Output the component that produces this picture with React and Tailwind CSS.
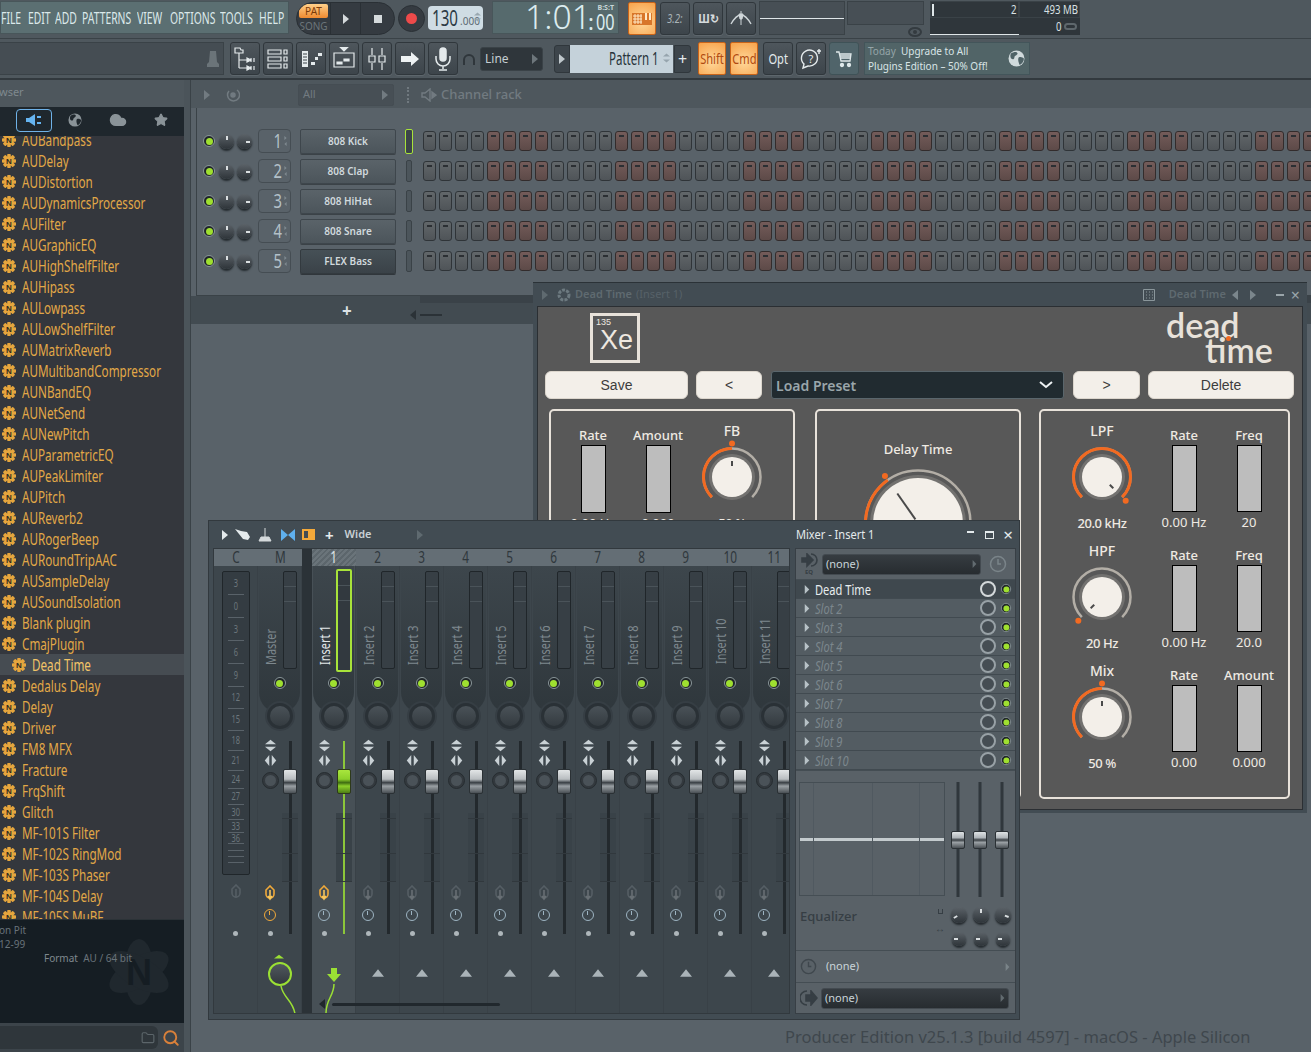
import { Cloud, Star, Search, Folder } from 'lucide-react';

const plugins = ['AUBandpass','AUDelay','AUDistortion','AUDynamicsProcessor','AUFilter','AUGraphicEQ','AUHighShelfFilter','AUHipass','AULowpass','AULowShelfFilter','AUMatrixReverb','AUMultibandCompressor','AUNBandEQ','AUNetSend','AUNewPitch','AUParametricEQ','AUPeakLimiter','AUPitch','AUReverb2','AURogerBeep','AURoundTripAAC','AUSampleDelay','AUSoundIsolation','Blank plugin','CmajPlugin','Dead Time','Dedalus Delay','Delay','Driver','FM8 MFX','Fracture','FrqShift','Glitch','MF-101S Filter','MF-102S RingMod','MF-103S Phaser','MF-104S Delay','MF-105S MuBF'];
const channels = ['808 Kick','808 Clap','808 HiHat','808 Snare','FLEX Bass'];
const scale = [['3',23],['0',23],['3',23],['6',23],['9',23],['12',22],['15',22],['18',20],['21',20],['24',18],['27',16],['30',15],['33',13],['36',11]];

function Narrow({ children, className = '' }) {
  return <span className={`inline-block origin-left scale-x-[.74] whitespace-nowrap ${className}`}>{children}</span>;
}

function NarrowC({ children, className = '' }) {
  return <span className={`inline-block origin-center scale-x-[.74] whitespace-nowrap ${className}`}>{children}</span>;
}

function Tri({ className = '', dir = 'r' }) {
  const pts = { r: '1,0 7,5 1,10', l: '7,0 1,5 7,10', u: '0,7 5,1 10,7', d: '0,1 5,7 10,1' };
  return <svg width="8" height="10" preserveAspectRatio="none" viewBox={dir === 'u' || dir === 'd' ? '0 0 10 8' : '0 0 8 10'} className={`shrink-0 ${className}`}><polygon points={pts[dir]} fill="currentColor" /></svg>;
}

function Globe({ size = 16, land = '#4f6367', sea = '#d0dadc' }) {
  return (
    <svg width={size} height={size} viewBox="0 0 16 16" className="shrink-0">
      <circle cx="8" cy="8" r="7.5" fill={sea} />
      <path d="M3 3c2-1 5-2 6 0 0 2-3 2-3 4s-2 2-3 1-1-4 0-5zM10 7c2-1 4 0 5 1 0 3-2 5-4 6-1-2-2-5-1-7z" fill={land} />
    </svg>
  );
}

function Led() {
  return (
    <div className="w-[12px] h-[12px] shrink-0 rounded-full bg-[#20262a] border border-[#8a9699] flex items-center justify-center">
      <div className="w-[7px] h-[7px] rounded-full bg-[#9fe030]" />
    </div>
  );
}

function Dial({ size = 16, angle = 0 }) {
  return (
    <div className="relative shrink-0 rounded-full bg-[linear-gradient(#5b6268,#2e3439)] shadow-[0_2px_2px_#23292d]" style={{ width: size, height: size }}>
      <div className="absolute inset-0" style={{ transform: `rotate(${angle}deg)` }}>
        <div className="absolute left-1/2 top-[2px] w-[2px] h-[4px] -ml-[1px] bg-[#d9dee0]" />
      </div>
    </div>
  );
}

function PluginIcon() {
  const teeth = [0, 45, 90, 135];
  return (
    <svg width="14" height="14" viewBox="0 0 14 14" className="shrink-0">
      {teeth.map(a => <rect key={a} x="5.2" y="0" width="3.6" height="14" rx=".8" fill="#e6a63e" transform={`rotate(${a} 7 7)`} />)}
      <circle cx="7" cy="7" r="4.6" fill="#e6a63e" />
      <text x="7" y="10" textAnchor="middle" fontSize="8" fontWeight="700" fill="#2e2a20" fontFamily="Liberation Sans, sans-serif">N</text>
    </svg>
  );
}

function ToolBtn({ children, className = '' }) {
  return <div className={`w-[30px] h-[33px] shrink-0 rounded-[3px] border border-[#30373c] bg-[linear-gradient(#4e565c,#3d454b)] shadow-[0_1px_0_#5d666c] flex items-center justify-center text-[#e4eaec] ${className}`}>{children}</div>;
}

function OrangeBtn({ children, className = '' }) {
  return <div className={`h-[33px] shrink-0 rounded-[2px] border border-[#c8641a] bg-[radial-gradient(circle_at_50%_60%,#ffd89a,#f7a24a)] flex items-center justify-center text-[#b04a10] ${className}`}>{children}</div>;
}

function MenuBar() {
  const items = [['FILE', 27], ['EDIT', 27], ['ADD', 27], ['PATTERNS', 55], ['VIEW', 33], ['OPTIONS', 50], ['TOOLS', 39], ['HELP', 30]];
  return (
    <div className="w-[289px] h-[33px] mt-[1px] shrink-0 bg-[#5b6f72] border border-[#48565a] flex items-center text-[17px] text-[#dbe9ea]">
      {items.map(([t, w]) => <div key={t} className="shrink-0" style={{ width: w }}><span className="inline-block origin-left scale-x-[.61] whitespace-nowrap">{t}</span></div>)}
    </div>
  );
}

function Transport() {
  return (
    <div className="ml-[7px] w-[99px] h-[33px] mt-[2px] shrink-0 rounded-full bg-[#353b41] border border-[#2a3035] flex overflow-hidden">
      <div className="w-[34px] flex flex-col items-center border-r border-[#2a3035]">
        <div className="w-[29px] h-[14px] mt-[1px] rounded-[2px] bg-[linear-gradient(#ffd08a,#f08a30)] text-[10px] leading-[14px] text-center text-[#7a3b0a]">PAT</div>
        <div className="text-[10px] leading-[16px] text-[#6c757a]">SONG</div>
      </div>
      <div className="w-[30px] flex items-center justify-center border-r border-[#2a3035] text-[#d5dadc]"><Tri /></div>
      <div className="flex-1 flex items-center justify-center"><div className="w-[8px] h-[8px] bg-[#d5dadc]" /></div>
    </div>
  );
}

function TopRow() {
  return (
    <div className="h-[39px] flex bg-[#4f585e] border-b border-[#3a4247]">
      <MenuBar />
      <Transport />
      <div className="ml-[3px] mt-[5px] w-[27px] h-[27px] shrink-0 rounded-full bg-[#353b41] border border-[#2a3035] flex items-center justify-center"><div className="w-[11px] h-[11px] rounded-full bg-[#ee4a4a]" /></div>
      <div className="ml-[3px] mt-[6px] w-[55px] h-[24px] shrink-0 rounded-[4px] bg-[#cfdce4] flex items-center pl-[4px] text-[#2b3a44] relative">
        <span className="inline-block origin-left scale-x-[.72] whitespace-nowrap text-[21px] leading-[24px]">130</span>
        <span className="-ml-[8px] text-[10px] mt-[6px] text-[#5c6a73]">.000</span>
        <div className="absolute right-[2px] top-[6px] flex flex-col gap-[2px] text-[#9aa8b0]"><Tri dir="u" className="!w-[7px] !h-[4px]" /><Tri dir="d" className="!w-[7px] !h-[4px]" /></div>
      </div>
      <div className="ml-[9px] mt-[1px] w-[127px] h-[33px] shrink-0 bg-[#566a6d] border border-[#48565a] relative">
        <div className="absolute left-[32px] top-[-5px] text-[33px] leading-[40px] text-[#dcecef] font-light"><span className="inline-block origin-left scale-x-[1.02] whitespace-nowrap">1:01</span></div>
        <div className="absolute left-[103px] top-[7px] text-[22px] leading-[24px] text-[#dcecef]"><Narrow>00</Narrow></div>
        <div className="absolute left-[95px] top-[7px] text-[22px] leading-[24px] text-[#dcecef]">:</div>
        <div className="absolute right-[4px] top-[1px] text-[7px] leading-[9px] font-bold text-[#c9d6d8]">B:S:T</div>
      </div>
      <OrangeBtn className="ml-[9px] mt-[2px] w-[28px]">
        <svg width="22" height="14" viewBox="0 0 22 14"><path d="M1 1h11v12H1zM12 1h9v12h-9z" fill="#d8762a" /><path d="M2 4h9M2 7h9M2 10h9M4 2v10M7 2v10M10 2v10" stroke="#ffe9c6" strokeWidth="1" /><path d="M14 1h2v7h-2zM18 1h2v7h-2z" fill="#ffe9c6" /></svg>
      </OrangeBtn>
      <ToolBtn className="ml-[4px] mt-[2px]"><span className="text-[12px] italic text-[#aab4b8] scale-x-[.8]">3.2:</span></ToolBtn>
      <ToolBtn className="ml-[3px] mt-[2px]"><span className="text-[12px] font-bold text-[#d5dadc] scale-x-[.9]">Ш↻</span></ToolBtn>
      <ToolBtn className="ml-[3px] mt-[2px]">
        <svg width="24" height="20" viewBox="0 0 24 20"><path d="M2 15C6 8 9 6 12 6s6 2 10 9" fill="none" stroke="#cfd6d9" strokeWidth="1.4" /><path d="M12 2v14M10 5h4l-1 5h-2z" stroke="#cfd6d9" fill="#cfd6d9" strokeWidth="1" /></svg>
      </ToolBtn>
      <div className="ml-[3px] mt-[1px] w-[86px] h-[34px] shrink-0 bg-[#474f55] border border-[#3a4247] flex items-center"><div className="w-full h-[1px] bg-[#dfe6e8]" /></div>
      <div className="ml-[2px] mt-[1px] w-[77px] shrink-0 relative">
        <div className="h-[24px] bg-[#474f55] border border-[#3a4247]" />
        <svg width="14" height="10" viewBox="0 0 14 10" className="absolute right-[2px] top-[26px]"><ellipse cx="7" cy="5" rx="6" ry="4" fill="none" stroke="#343b40" strokeWidth="2" /><circle cx="7" cy="5" r="2" fill="#343b40" /></svg>
      </div>
      <div className="ml-[6px] mt-[1px] w-[150px] h-[34px] shrink-0 grid grid-cols-[89px_61px] grid-rows-2 text-[#d9e0e3] text-[13px]">
        <div className="bg-[#2f363b] border border-[#3a4247] flex items-center justify-between pl-[1px] pr-[2px]"><div className="w-[2px] h-[12px] bg-[#dfe6e8]" /><Narrow className="origin-right">2</Narrow></div>
        <div className="bg-[#2f363b] border border-[#3a4247] flex items-center justify-end pr-[1px]"><Narrow className="origin-right">493 MB</Narrow></div>
        <div className="bg-[#2f363b] border-b border-[#dfe6e8]" />
        <div className="bg-[#2f363b] flex items-center justify-end gap-[3px] pr-[3px]"><Narrow className="origin-right">0</Narrow><div className="w-[13px] h-[7px] rounded-full border-2 border-[#5e676c]" /></div>
      </div>
    </div>
  );
}

function Row2() {
  return (
    <div className="h-[41px] flex items-center bg-[#4f585e] border-b-2 border-[#32393e]">
      <div className="w-[224px] h-[33px] shrink-0 bg-[#454d53] border-y border-r border-[#3a4247] flex items-center justify-end pr-[3px]">
        <svg width="14" height="18" viewBox="0 0 14 18"><path d="M4 1h6l1 11 2 2v3H1v-3l2-2z" fill="#6b7479" /></svg>
      </div>
      <div className="ml-[6px] flex gap-[3px] shrink-0">
        <ToolBtn><svg width="22" height="24" viewBox="0 0 22 24" fill="none" stroke="#e4eaec" strokeWidth="1.2"><path d="M1 1h5l1 2h2v3H1zM5 6v15M5 13h8M5 21h8" /><path d="M13 11l4 2-4 2zM13 19l4 2-4 2zM17 11v4M17 19v4M20 11v4M20 19v4" fill="#e4eaec" /></svg></ToolBtn>
        <ToolBtn><svg width="22" height="22" viewBox="0 0 22 22" fill="none" stroke="#e4eaec" strokeWidth="1.2"><path d="M1 2h13v4H1zM1 9h13v4H1zM1 16h13v4H1zM17 2h3v4h-3zM17 9h3v4h-3zM17 16h3v4h-3z" /></svg></ToolBtn>
        <ToolBtn><svg width="22" height="22" viewBox="0 0 22 22" fill="#e4eaec"><path d="M2 3h6v16H2z" /><path d="M3 6h4M3 9h4M3 12h4M3 15h4" stroke="#3d454b" /><path d="M11 14h4v3h-4zM15 9h3v3h-3zM18 5h4v3h-4z" /></svg></ToolBtn>
        <ToolBtn><svg width="22" height="24" viewBox="0 0 22 24" fill="none" stroke="#e4eaec" strokeWidth="1.2"><path d="M7 0h8l-4 4z" fill="#e4eaec" /><path d="M1 6h20v14H1z" /><path d="M4 15h5v2H4zM11 12h5v2h-5z" fill="#e4eaec" /></svg></ToolBtn>
        <ToolBtn><svg width="20" height="24" viewBox="0 0 20 24" fill="none" stroke="#e4eaec" strokeWidth="1.2"><path d="M5 1v7M5 16v7M15 1v7M15 16v7M2 9h6v6H2zM12 9h6v6h-6z" /></svg></ToolBtn>
        <ToolBtn><svg width="20" height="14" viewBox="0 0 20 14"><path d="M1 4h10V0l8 7-8 7v-4H1z" fill="#eef2f3" /></svg></ToolBtn>
        <ToolBtn><svg width="18" height="24" viewBox="0 0 18 24" fill="none" stroke="#e4eaec" strokeWidth="1.5"><rect x="6" y="1" width="6" height="13" rx="3" fill="#e4eaec" /><path d="M2 9v3a7 7 0 0 0 14 0V9M9 19v3M5 23h8" /></svg></ToolBtn>
      </div>
      <svg width="14" height="14" viewBox="0 0 14 14" className="ml-[4px] shrink-0" fill="none" stroke="#2f363b" strokeWidth="2"><path d="M2 13V8a5 5 0 0 1 10 0v5" /></svg>
      <div className="ml-[4px] w-[63px] h-[24px] shrink-0 rounded-[3px] bg-[#2f363b] border border-[#3a4247] flex items-center justify-between pl-[4px] pr-[3px] text-[12px] text-[#c5ced2]">Line<Tri className="text-[#6d767b]" /></div>
      <div className="ml-[11px] w-[16px] h-[28px] shrink-0 rounded-l-[3px] bg-[#3d454b] border border-[#30373c] flex items-center justify-center text-[#bfc7cb]"><Tri /></div>
      <div className="w-[103px] h-[28px] shrink-0 bg-[#c5d2da] flex items-center justify-end pr-[14px] text-[18px] text-[#27333b] relative">
        <span className="inline-block origin-right scale-x-[.64] whitespace-nowrap">Pattern 1</span>
        <div className="absolute right-[3px] top-[8px] flex flex-col gap-[2px] text-[#96a4ad]"><Tri dir="u" className="!w-[7px] !h-[4px]" /><Tri dir="d" className="!w-[7px] !h-[4px]" /></div>
      </div>
      <div className="ml-[1px] w-[17px] h-[28px] shrink-0 rounded-r-[3px] bg-[#3d454b] border border-[#30373c] flex items-center justify-center text-[#e4eaec] text-[16px]">+</div>
      <OrangeBtn className="ml-[7px] w-[28px] text-[15px]"><NarrowC>Shift</NarrowC></OrangeBtn>
      <OrangeBtn className="ml-[4px] w-[28px] text-[15px]"><NarrowC>Cmd</NarrowC></OrangeBtn>
      <ToolBtn className="ml-[5px] text-[15px]"><NarrowC>Opt</NarrowC></ToolBtn>
      <ToolBtn className="ml-[3px]"><svg width="24" height="24" viewBox="0 0 24 24" fill="none" stroke="#e4eaec" strokeWidth="1.4"><path d="M4 21l1-4a8 8 0 1 1 4 2z" /><text x="12" y="16" textAnchor="middle" fontSize="11" fill="#e4eaec" stroke="none">?</text><path d="M20 2v5M18 4h4" /></svg></ToolBtn>
      <div className="ml-[3px] w-[30px] h-[33px] shrink-0 rounded-[3px] border border-[#3f5257] bg-[#50646a] flex items-center justify-center">
        <svg width="18" height="18" viewBox="0 0 18 18" fill="none" stroke="#dfe8ea" strokeWidth="1.3"><path d="M1 2h3l2 9h9l1-7H5" /><path d="M5 6h11M6 8h10" /><circle cx="7" cy="15" r="1.5" fill="#dfe8ea" /><circle cx="14" cy="15" r="1.5" fill="#dfe8ea" /></svg>
      </div>
      <div className="ml-[5px] w-[166px] h-[33px] shrink-0 bg-[#516467] border border-[#43555a] flex items-center justify-between pl-[3px] pr-[4px] text-[10px] leading-[15px] text-[#d9e4e6]">
        <div className="whitespace-nowrap"><span className="text-[#95a4a7]">Today</span>&nbsp; Upgrade to All<br />Plugins Edition – 50% Off!</div>
        <Globe size={17} />
      </div>
    </div>
  );
}

function Sidebar() {
  return (
    <div className="w-[184px] h-full flex flex-col shrink-0 bg-[#34373d]">
      <div className="h-[27px] bg-[#4e575d] text-[11px] leading-[23px] text-[#7f898e] whitespace-nowrap overflow-hidden shrink-0"><span className="-ml-[1px]">wser</span></div>
      <div className="h-[29px] pb-[3px] bg-[#1f272d] flex items-center shrink-0 relative z-10">
        <div className="ml-[16px] w-[36px] h-[23px] shrink-0 rounded-[4px] border border-[#6fb2e8] flex items-center justify-center">
          <svg width="16" height="12" viewBox="0 0 16 12"><path d="M0 4h3l6-4v12l-6-4H0z" fill="#66b4f0" /><path d="M11 3h4M11 9h4" stroke="#66b4f0" strokeWidth="2" /></svg>
        </div>
        <div className="ml-[16px]"><Globe size={14} land="#1f272d" sea="#8a9398" /></div>
        <Cloud size={18} className="ml-[27px] shrink-0 text-[#8a9398] fill-[#8a9398]" />
        <Star size={14} className="ml-[27px] shrink-0 text-[#8a9398] fill-[#8a9398]" />
      </div>
      <div className="h-[783px] overflow-hidden shrink-0">
        <div className="-mt-[7px] text-[16px] text-[#e2a847]">
          {plugins.map(p => (
            <div key={p} className={p === 'Dead Time' ? 'h-[21px] flex items-center pl-[12px] bg-[#464c52] text-[#f2c468]' : 'h-[21px] flex items-center pl-[2px]'}>
              <PluginIcon />
              <span className="ml-[6px] inline-block origin-left scale-x-[.73] whitespace-nowrap">{p}</span>
            </div>
          ))}
        </div>
      </div>
      <div className="h-[104px] bg-[#151d23] relative overflow-hidden text-[10px] leading-[14px] text-[#69737a] pt-[3px] shrink-0 border-t border-[#2b3237]">
        <svg width="66" height="68" viewBox="0 0 66 68" className="absolute left-[106px] top-[18px]">
          <g fill="#20282e">{[0, 60, 120].map(a => <ellipse key={a} cx="33" cy="34" rx="15" ry="33" transform={`rotate(${a} 33 34)`} />)}</g>
          <text x="33" y="47" textAnchor="middle" fontSize="36" fontWeight="700" fill="#151d23" fontFamily="Liberation Sans, sans-serif">N</text>
        </svg>
        <div className="relative -ml-[1px]">on Pit</div>
        <div className="relative -ml-[1px]">12-99</div>
        <div className="relative ml-[44px] whitespace-nowrap"><span className="text-[#7f888e]">Format</span>&nbsp; AU / 64 bit</div>
      </div>
      <div className="flex-1 bg-[#3c444a] flex items-center relative">
        <div className="w-[158px] h-[23px] shrink-0 rounded-r-[6px] bg-[#2f363b] flex items-center justify-end pr-[3px]">
          <Folder size={14} className="text-[#5c656a]" />
        </div>
        <Search size={18} strokeWidth={2.5} className="ml-[4px] shrink-0 text-[#d9803a]" />
      </div>
    </div>
  );
}

function StepRow({ selected, dark, idx, name }) {
  return (
    <div className="h-[30px] flex items-center">
      <div className="ml-[6px]"><Led /></div>
      <div className="ml-[4px]"><Dial size={15} /></div>
      <div className="ml-[3px]"><Dial size={15} angle={90} /></div>
      <div className="ml-[6px] w-[33px] h-[24px] shrink-0 rounded-[4px] border border-[#454d53] flex items-center justify-center pl-[6px] text-[20px] text-[#b3c0c8] relative">
        <NarrowC>{idx}</NarrowC>
        <div className="absolute right-[3px] top-[6px] text-[#7f8a90] flex flex-col gap-[2px]"><Tri className="!w-[3px] !h-[4px]" /><Tri dir="l" className="!w-[3px] !h-[4px]" /></div>
      </div>
      <div className={dark ? 'ml-[9px] w-[96px] h-[25px] shrink-0 rounded-[2px] border border-[#333a3f] bg-[linear-gradient(#465056,#3a4248)] shadow-[0_1px_0_#30363b] text-[10px] font-semibold text-[#d1d9dd] flex items-center justify-center' : 'ml-[9px] w-[96px] h-[25px] shrink-0 rounded-[2px] border border-[#3e464c] bg-[linear-gradient(#5a6369,#4c555b)] shadow-[0_1px_0_#3b4247] text-[10px] font-semibold text-[#d1d9dd] flex items-center justify-center'}>{name}</div>
      <div className={selected ? 'ml-[9px] w-[8px] h-[25px] shrink-0 rounded-[2px] border border-[#a8e33a] bg-[#3c4449]' : 'ml-[10px] w-[6px] h-[22px] shrink-0 rounded-[2px] border border-[#3a4247] bg-[#4c555b]'} />
      <div className={selected ? 'ml-[10px] flex gap-[3px]' : 'ml-[11px] flex gap-[3px]'}>
        {Array.from({ length: 56 }, (_, i) => (
          <div key={i} className={Math.floor(i / 4) % 2 === 0 ? 'w-[13px] h-[20px] shrink-0 rounded-[3px] border border-[#2f3438] bg-[linear-gradient(#62676a,#4f5458)] pt-[3px] px-[3px]' : 'w-[13px] h-[20px] shrink-0 rounded-[3px] border border-[#332c2c] bg-[linear-gradient(#745c5a,#5d4a48)] pt-[3px] px-[3px]'}>
            <div className="h-[2px] bg-[#2b2f33]" />
          </div>
        ))}
      </div>
    </div>
  );
}

function ChannelRack() {
  return (
    <div className="absolute left-0 top-0 right-0 h-[244px] flex flex-col">
      <div className="h-[28px] pt-[1px] bg-[#4e575d] flex items-center text-[#727b81] shrink-0">
        <Tri className="ml-[12px]" />
        <svg width="14" height="14" viewBox="0 0 14 14" className="ml-[15px] shrink-0" fill="none" stroke="#727b81" strokeWidth="1.5"><path d="M3 3a6 6 0 1 0 8-1" /><circle cx="7" cy="7" r="2" fill="#727b81" /></svg>
        <div className="ml-[58px] w-[96px] h-[22px] shrink-0 rounded-[2px] bg-[#474f55] border border-[#454d53] flex items-center justify-between px-[4px] text-[11px]">All<Tri /></div>
        <div className="ml-[13px] h-[16px] border-l-2 border-dotted border-[#70797f]" />
        <svg width="16" height="14" viewBox="0 0 16 14" className="ml-[12px] shrink-0" fill="none" stroke="#727b81" strokeWidth="1.4"><path d="M1 5h3l5-4v12l-5-4H1z" /><path d="M11 4l4 3-4 3z" fill="#727b81" /></svg>
        <span className="ml-[4px] text-[13px] font-medium">Channel rack</span>
      </div>
      <div className="h-[188px] ml-[5px] bg-[#596269] border-l border-b border-[#3a4247] pt-[18px] overflow-hidden shrink-0">
        {channels.map((c, i) => <StepRow key={c} name={c} idx={i + 1} selected={i === 0} dark={i === 4} />)}
      </div>
      <div className="flex-1 bg-[#424b51] flex items-start relative">
        <div className="ml-[151px] mt-[4px] text-[17px] leading-[22px] font-bold text-[#dce2e5]">+</div>
        <Tri dir="l" className="ml-[57px] mt-[14px] text-[#2b3237]" />
        <div className="ml-[3px] mt-[18px] w-[22px] h-[2px] bg-[#2b3237]" />
        <div className="absolute left-[229px] top-0 right-0 h-[7px] bg-[#3a4248]" />
      </div>
    </div>
  );
}

function PluginKnob({ value, size = 60, inner = 20, longTick }) {
  const r = size / 2 - 1.5;
  const c = size / 2;
  const pt = a => {
    const t = ((a - 90) * Math.PI) / 180;
    return [c + r * Math.cos(t), c + r * Math.sin(t)];
  };
  const arc = (a, b) => {
    const [x1, y1] = pt(a);
    const [x2, y2] = pt(b);
    return `M${x1} ${y1}A${r} ${r} 0 ${b - a > 180 ? 1 : 0} 1 ${x2} ${y2}`;
  };
  const v = -135 + 270 * value;
  const tick = (v * Math.PI) / 180;
  const dot = ((v - 90) * Math.PI) / 180;
  const t1 = longTick ? 0.1 : 0.55;
  return (
    <svg width={size + 12} height={size + 12} viewBox={`-6 -6 ${size + 12} ${size + 12}`} className="shrink-0 overflow-visible">
      <path d={arc(-135, 135)} fill="none" stroke="#b3aea6" strokeWidth="2.5" />
      {value > 0 && <path d={arc(-135, v)} fill="none" stroke="#f26a21" strokeWidth="3" />}
      <circle cx={c} cy={c} r={inner + 3} fill="#8c8a86" opacity=".5" />
      <circle cx={c} cy={c} r={inner} fill="#f3efe9" />
      <line x1={c + Math.sin(tick) * inner * t1} y1={c - Math.cos(tick) * inner * t1} x2={c + Math.sin(tick) * inner * 0.8} y2={c - Math.cos(tick) * inner * 0.8} stroke="#4a4a4a" strokeWidth="2" />
      <circle cx={c + Math.cos(dot) * (r + 5)} cy={c + Math.sin(dot) * (r + 5)} r="3" fill="#f26a21" />
    </svg>
  );
}

function SliderCell({ label, value }) {
  return (
    <div className="flex flex-col items-center w-[62px]">
      <div className="text-[13px] leading-[18px] font-medium text-[#efeae3] whitespace-nowrap mt-[15px]">{label}</div>
      <div className="w-[25px] h-[68px] mt-[1px] bg-[#bdbdbd] border border-black" />
      <div className="text-[13px] leading-[18px] mt-[1px] text-[#efeae3] whitespace-nowrap">{value}</div>
    </div>
  );
}

function KnobCell({ label, value, pos }) {
  return (
    <div className="flex flex-col items-center w-[72px]">
      <div className="text-[14px] leading-[18px] font-medium text-[#efeae3] mt-[11px]">{label}</div>
      <div className="mt-[1px]"><PluginKnob value={pos} /></div>
      <div className="text-[13px] leading-[18px] mt-[1px] font-medium text-[#efeae3] whitespace-nowrap tracking-[-.4px]">{value}</div>
    </div>
  );
}

function PluginWindow() {
  const btn = 'h-[28px] shrink-0 rounded-[6px] bg-[#f3efe9] border border-[#dcd6cd] text-[14px] text-[#3d3d3d] flex items-center justify-center [font-family:Liberation_Sans,sans-serif]';
  return (
    <div className="absolute left-[342px] top-[202px] w-[774px] h-[531px] bg-[#424c53] border-t border-[#2b3237] flex flex-col">
      <div className="h-[23px] flex items-center text-[#5f6a70] text-[11px] font-semibold shrink-0">
        <Tri className="ml-[8px]" />
        <svg width="16" height="16" viewBox="0 0 16 16" className="ml-[7px] shrink-0" fill="none" stroke="#6d7a80" strokeWidth="3" strokeDasharray="3 1.2"><circle cx="8" cy="8" r="5" /></svg>
        <span className="ml-[3px]">Dead Time</span>
        <span className="ml-[4px] font-normal text-[#566168]">(Insert 1)</span>
        <svg width="12" height="12" viewBox="0 0 12 12" className="ml-auto shrink-0" fill="none" stroke="#8a969b"><path d="M.5.5h11v11H.5zM3 3h1M6 3h1M9 3h1M3 6h1M6 6h1M9 6h1M3 9h1M6 9h1M9 9h1" /></svg>
        <span className="ml-[14px] text-[#5f6a70]">Dead Time</span>
        <Tri dir="l" className="ml-[5px] text-[#7b868c]" />
        <Tri className="ml-[10px] text-[#7b868c]" />
        <div className="ml-[19px] w-[8px] h-[2px] bg-[#9aa5aa]" />
        <span className="ml-[7px] mr-[7px] text-[16px] font-normal text-[#9aa5aa] leading-[16px]">×</span>
      </div>
      <div className="mx-[4px] h-[504px] bg-[#585858] border border-[#2b2f33] flex flex-col px-[7px] shrink-0 overflow-hidden">
        <div className="h-[64px] flex relative shrink-0">
          <div className="ml-[45px] mt-[6px] w-[50px] h-[50px] border-[3px] border-[#e8e2da] text-[#eee8e0] [font-family:Liberation_Sans,sans-serif] relative">
            <div className="absolute left-[3px] top-[1px] text-[9px] leading-[10px]">135</div>
            <div className="absolute left-[7px] top-[9px] text-[27px] leading-[30px]">Xe</div>
          </div>
          <div className="ml-auto mr-[21px] mt-[5px] w-[108px] text-[34px] leading-[25px] font-semibold text-[#e8e2da] [font-family:Lato,sans-serif] relative">
            <div>dead</div>
            <div className="ml-[39px]">time</div>
            <div className="absolute left-[60px] top-[24px] w-[5px] h-[5px] rounded-full bg-[#f26a21]" />
          </div>
        </div>
        <div className="flex items-center shrink-0 h-[28px]">
          <div className={`${btn} w-[143px]`}>Save</div>
          <div className={`${btn} ml-[8px] w-[66px] text-[12px]`}>&lt;</div>
          <div className="ml-[9px] w-[293px] h-[28px] shrink-0 rounded-[3px] bg-[#212b30] border border-[#5a666c] flex items-center justify-between pl-[4px] pr-[10px] text-[14px] font-semibold text-[#9aa6ab]">
            Load Preset
            <svg width="14" height="8" viewBox="0 0 14 8" fill="none" stroke="#eef2f3" strokeWidth="2"><path d="M1 1l6 5 6-5" /></svg>
          </div>
          <div className={`${btn} ml-[9px] w-[67px] text-[12px]`}>&gt;</div>
          <div className={`${btn} ml-[8px] w-[146px]`}>Delete</div>
        </div>
        <div className="flex mt-[10px] ml-[4px]">
          <div className="w-[246px] h-[390px] shrink-0 rounded-[5px] border-2 border-[#e8e2da] flex pl-[11px]">
            <SliderCell label="Rate" value="0.00 Hz" />
            <div className="ml-[3px]"><SliderCell label="Amount" value="0.000" /></div>
            <div className="ml-[7px]"><KnobCell label="FB" value="50 %" pos={0.5} /></div>
          </div>
          <div className="ml-[20px] w-[206px] h-[390px] shrink-0 rounded-[5px] border-2 border-[#e8e2da] flex flex-col items-center">
            <div className="mt-[28px] text-[13px] leading-[20px] font-medium text-[#efeae3]">Delay Time</div>
            <div className="mt-[4px]"><PluginKnob value={0.37} size={108} inner={45} longTick /></div>
          </div>
          <div className="ml-[18px] w-[251px] h-[390px] shrink-0 rounded-[5px] border-2 border-[#e8e2da] grid grid-cols-[84px_62px_62px] grid-rows-[120px_120px_120px] pl-[25px] gap-x-[3px] content-start">
            <KnobCell label="LPF" value="20.0 kHz" pos={1} />
            <SliderCell label="Rate" value="0.00 Hz" />
            <SliderCell label="Freq" value="20" />
            <KnobCell label="HPF" value="20 Hz" pos={0} />
            <SliderCell label="Rate" value="0.00 Hz" />
            <SliderCell label="Freq" value="20.0" />
            <KnobCell label="Mix" value="50 %" pos={0.5} />
            <SliderCell label="Rate" value="0.00" />
            <SliderCell label="Amount" value="0.000" />
          </div>
        </div>
      </div>
    </div>
  );
}

function Fader({ green, className = '' }) {
  return (
    <div className={green ? `w-[14px] h-[25px] rounded-[2px] bg-[linear-gradient(#a9e63e,#8cd02a_40%,#3f6d12_55%,#8cd02a_70%,#4f7f16)] border border-[#2e3a1a] ${className}` : `w-[14px] h-[25px] rounded-[2px] bg-[linear-gradient(#e2e5e6,#b8bdc0_40%,#3a4045_55%,#9aa0a4_70%,#4a5055)] border border-[#2b3135] ${className}`} />
  );
}

function Strip({ num, name, selected, master }) {
  return (
    <div className={selected ? 'w-[44px] h-full shrink-0 flex flex-col bg-[#475056] border-r border-[#394147]' : 'w-[44px] h-full shrink-0 flex flex-col bg-[#3d464c] border-r border-[#394147]'}>
      <div className={selected ? 'h-[17px] -mr-[1px] shrink-0 relative bg-[repeating-linear-gradient(135deg,#6a747a,#6a747a_2px,#5c666c_2px,#5c666c_4px)] text-[16px] leading-[17px] text-center text-[#dde3e6]' : 'h-[17px] -mr-[1px] shrink-0 relative bg-[#646e75] text-[16px] leading-[17px] text-center text-[#2f373c]'}>
        <NarrowC>{num}</NarrowC>
      </div>
      <div className="h-[147px] mx-[1px] rounded-b-[21px] bg-[linear-gradient(#3d464c,#2f373c)] flex flex-col items-center shrink-0">
        <div className="h-[106px] w-full flex pt-[3px] shrink-0">
          <div className="w-[23px] shrink-0 flex items-end justify-center pb-[2px]">
            <div className={selected ? 'origin-center [writing-mode:vertical-rl] rotate-180 scale-y-[.78] text-[14px] leading-[14px] whitespace-nowrap text-[#e3e8ea]' : 'origin-center [writing-mode:vertical-rl] rotate-180 scale-y-[.78] text-[14px] leading-[14px] whitespace-nowrap text-[#7e888e]'}>{name}</div>
          </div>
          <div className={selected ? 'w-[16px] h-[103px] shrink-0 rounded-[2px] bg-[#32393f] border-2 border-[#a8e33a]' : 'ml-[1px] mt-[2px] w-[14px] h-[98px] shrink-0 rounded-[2px] bg-[#373f45] border border-[#20262a]'}>
            <div className="mt-[14px] h-[1px] bg-[#4a5359]" />
            <div className="mt-[14px] h-[1px] bg-[#4a5359]" />
          </div>
        </div>
        <div className="mt-[5px]"><Led /></div>
        <div className="mt-[12px] w-[30px] h-[30px] shrink-0 rounded-full bg-[#2a3136] border-2 border-[#363e44] flex items-center justify-center relative">
          <div className="w-[20px] h-[20px] rounded-full bg-[linear-gradient(#4a5258,#343b40)]" />
        </div>
      </div>
      <div className="h-[233px] flex shrink-0">
        <div className="w-[24px] shrink-0 flex flex-col items-center text-[#c9d1d5]">
          <Tri dir="u" className="mt-[26px] !w-[11px] !h-[6px]" />
          <Tri dir="d" className="mt-[1px] !w-[11px] !h-[6px]" />
          <div className="mt-[3px] flex gap-[1px]"><Tri dir="l" className="!h-[11px] !w-[6px]" /><Tri className="!h-[11px] !w-[6px]" /></div>
          <div className="mt-[6px] w-[17px] h-[17px] shrink-0 rounded-full bg-[#33393e] border border-[#262c30] flex items-center justify-center"><div className="w-[11px] h-[11px] rounded-full bg-[#4a5258]" /></div>
          <svg width="12" height="16" viewBox="0 0 12 16" className="mt-[96px] shrink-0" fill="none" stroke={master || selected ? '#f0a93a' : '#555e64'} strokeWidth="1.6"><path d="M2 9V5l4-4 4 4v4a4 4 0 0 1-8 0z" /><path d="M6 5v9M4 11l2 3 2-3" stroke={master || selected ? '#f7c65c' : '#686f74'} /></svg>
          <div className={master ? 'mt-[8px] w-[12px] h-[12px] shrink-0 rounded-full border-[1.5px] border-[#f0a93a] relative' : 'mt-[8px] w-[12px] h-[12px] shrink-0 rounded-full border-[1.5px] border-[#9db4c2] relative'}>
            <div className={master ? 'absolute left-[4px] top-[1px] w-[1px] h-[4px] bg-[#f0a93a]' : 'absolute left-[4px] top-[1px] w-[1px] h-[4px] bg-[#9db4c2]'} />
          </div>
          <div className="mt-[10px] w-[5px] h-[5px] shrink-0 rounded-full bg-[#aeb6ba]" />
        </div>
        <div className="w-[16px] shrink-0 relative flex flex-col items-center">
          <div className="absolute left-0 right-0 top-[100px] h-[68px] bg-[#394248]" />
          <div className={selected ? 'mt-[28px] w-[2px] h-[193px] shrink-0 relative bg-[#8cc63a]' : 'mt-[28px] w-[3px] h-[193px] shrink-0 relative bg-[#23292d]'} />
          <div className="absolute left-0 right-0 top-[105px] h-[1px] bg-[#31383d]" />
          <div className="absolute left-0 right-0 top-[140px] h-[1px] bg-[#31383d]" />
          <div className="absolute left-0 right-0 top-[168px] h-[1px] bg-[#31383d]" />
          <Fader green={selected} className="absolute left-[1px] top-[56px]" />
        </div>
      </div>
      <div className="flex-1 relative flex justify-center pt-[22px]">
        {master ? (
          <>
            <Tri dir="u" className="absolute left-[16px] top-[8px] !w-[10px] !h-[5px] text-[#9be034]" />
            <div className="w-[24px] h-[24px] -mt-[6px] shrink-0 rounded-full border-2 border-[#9be034] bg-[linear-gradient(#50585e,#33393e)]" />
            <svg width="20" height="30" viewBox="0 0 20 30" className="absolute left-[22px] top-[40px]" fill="none" stroke="#9be034" strokeWidth="1.5"><path d="M1 0c2 12 12 14 14 28" /></svg>
          </>
        ) : selected ? (
          <>
            <svg width="14" height="14" viewBox="0 0 14 14" className="shrink-0"><path d="M4 0h6v6h4l-7 8-7-8h4z" fill="#9be034" /></svg>
            <svg width="12" height="30" viewBox="0 0 12 30" className="absolute left-[13px] top-[38px]" fill="none" stroke="#9be034" strokeWidth="1.5"><path d="M9 0c0 12-8 15-8 29" /></svg>
          </>
        ) : (
          <Tri dir="u" className="!w-[12px] !h-[10px] text-[#aab3b8]" />
        )}
      </div>
    </div>
  );
}

function ScaleStrip() {
  return (
    <div className="w-[44px] h-full shrink-0 flex flex-col bg-[#3d464c] border-r border-[#394147]">
      <div className="h-[17px] -mr-[1px] shrink-0 relative bg-[#646e75] text-[16px] leading-[17px] text-center text-[#2f373c]"><NarrowC>C</NarrowC></div>
      <div className="mt-[5px] ml-[8px] w-[28px] h-[304px] shrink-0 rounded-[2px] bg-[#343c42] border border-[#20262a] flex flex-col items-center overflow-hidden">
        {scale.map(([n, h], i) => (
          <div key={i} className="w-[16px] shrink-0 border-b border-[#596269] text-[10px] text-center text-[#6d777d] flex items-center justify-center" style={{ height: h }}><NarrowC>{n}</NarrowC></div>
        ))}
        {[7, 6, 6].map((h, i) => <div key={i} className="w-[16px] shrink-0 border-b border-[#596269]" style={{ height: h }} />)}
      </div>
      <div className="flex-1 flex flex-col items-center">
        <svg width="12" height="16" viewBox="0 0 12 16" className="mt-[9px] shrink-0" fill="none" stroke="#555e64" strokeWidth="1.6"><path d="M2 9V5l4-4 4 4v4a4 4 0 0 1-8 0z" /><path d="M6 5v9" /></svg>
        <div className="mt-[31px] w-[5px] h-[5px] shrink-0 rounded-full bg-[#aeb6ba]" />
      </div>
    </div>
  );
}

function SlotRow({ name, active }) {
  return (
    <div className={active ? 'h-[19px] shrink-0 flex items-center bg-[#3f484e] border-b border-[#414a50] pl-[8px] pr-[3px]' : 'h-[19px] shrink-0 flex items-center bg-[#535c62] border-b border-[#414a50] pl-[8px] pr-[3px]'}>
      <Tri className="!w-[6px] !h-[9px] text-[#b8c2c7]" />
      <Narrow className={active ? 'ml-[5px] text-[15px] text-[#e7edef]' : 'ml-[5px] text-[15px] italic text-[#7c878d]'}>{name}</Narrow>
      <div className={active ? 'ml-auto w-[16px] h-[16px] shrink-0 rounded-full bg-[#454d53] border-2 border-[#d4d9db]' : 'ml-auto w-[16px] h-[16px] shrink-0 rounded-full bg-[#454d53] border-2 border-[#98a1a6]'} />
      <div className="ml-[4px] scale-[.85]"><Led /></div>
    </div>
  );
}

function EqFader() {
  return (
    <div className="w-[22px] shrink-0 relative flex justify-center">
      <div className="w-[4px] h-[115px] bg-[#30373c] border-x border-[#434b51]" />
      <div className="absolute left-[4px] top-[49px] w-[14px] h-[18px] rounded-[2px] bg-[linear-gradient(#dfe3e5,#b0b6ba_35%,#3a4045_50%,#9aa0a4_65%,#4a5055)] border border-[#2b3135]" />
    </div>
  );
}

function MixerTrackPanel() {
  const slots = ['Slot 2','Slot 3','Slot 4','Slot 5','Slot 6','Slot 7','Slot 8','Slot 9','Slot 10'];
  return (
    <div className="w-[221px] h-[466px] ml-[5px] bg-[#596167] border border-[#383f45] flex flex-col shrink-0 overflow-hidden">
      <div className="h-[31px] flex items-center border-b border-[#444d53] shrink-0">
        <svg width="18" height="22" viewBox="0 0 18 22" className="ml-[5px] shrink-0" fill="none" stroke="#363e44" strokeWidth="1.6"><path d="M1 5h5V1l6 6-6 6V9H1z" fill="#363e44" /><path d="M10 1a6 6 0 0 1 6 6 6 6 0 0 1-6 6" /><text x="8" y="21" fontSize="6" fontWeight="700" textAnchor="middle" fill="#363e44" stroke="none">EQ</text></svg>
        <div className="ml-[3px] w-[159px] h-[21px] shrink-0 rounded-[3px] bg-[linear-gradient(#363c41,#272c30)] border border-[#434a50] flex items-center justify-between px-[3px] text-[11px] text-[#c9d4d9]">(none)<Tri className="!w-[5px] !h-[8px] text-[#626b70]" /></div>
        <svg width="18" height="18" viewBox="0 0 18 18" className="ml-[8px] shrink-0" fill="none" stroke="#7a8489" strokeWidth="1.5"><circle cx="9" cy="9" r="7.5" /><path d="M9 4v5h3" /></svg>
      </div>
      <SlotRow name="Dead Time" active />
      {slots.map(s => <SlotRow key={s} name={s} />)}
      <div className="h-[12px] border-t border-[#444d53] shrink-0" />
      <div className="h-[115px] flex shrink-0 px-[3px]">
        <div className="w-[146px] h-[114px] shrink-0 border border-[#454e54] bg-[#596167] relative flex items-center">
          <div className="w-full h-[3px] shrink-0 bg-[#c4cbce]" />
          <div className="absolute left-[13px] top-0 bottom-0 w-[1px] bg-[#505960]" />
          <div className="absolute left-[72px] top-0 bottom-0 w-[1px] bg-[#505960]" />
          <div className="absolute left-[119px] top-0 bottom-0 w-[1px] bg-[#505960]" />
        </div>
        <div className="ml-[2px] flex shrink-0">
          <EqFader /><EqFader /><EqFader />
        </div>
      </div>
      <div className="h-[54px] flex shrink-0 border-b border-[#444d53] relative">
        <div className="pl-[4px] pt-[10px] text-[13px] font-medium text-[#363e44]">Equalizer</div>
        <div className="ml-auto mr-[4px] mt-[10px] grid grid-cols-3 gap-x-[6px] gap-y-[4px] justify-items-center">
          <Dial size={16} angle={-120} /><Dial size={16} /><Dial size={16} angle={110} />
          <Dial size={14} angle={-90} /><Dial size={14} angle={-90} /><Dial size={14} angle={-90} />
        </div>
        <div className="absolute left-[142px] top-[12px] w-[5px] h-[5px] border-x border-b border-[#363e44]" />
        <div className="absolute left-[139px] top-[26px] text-[10px] leading-[10px] text-[#363e44]">↔</div>
      </div>
      <div className="h-[32px] flex items-center border-b border-[#444d53] shrink-0">
        <svg width="17" height="17" viewBox="0 0 18 18" className="ml-[4px] shrink-0" fill="none" stroke="#3f474d" strokeWidth="1.5"><circle cx="9" cy="9" r="7.5" /><path d="M9 4v5h3" /></svg>
        <span className="ml-[9px] text-[11px] text-[#c9d4d9]">(none)</span>
        <Tri className="ml-auto mr-[5px] !w-[5px] !h-[8px] text-[#7a8489]" />
      </div>
      <div className="flex-1 flex items-center">
        <svg width="18" height="16" viewBox="0 0 18 16" className="ml-[4px] shrink-0" fill="none" stroke="#363e44" strokeWidth="1.6"><path d="M7 1a7 7 0 0 0 0 14" /><path d="M6 5h5V1l6 7-6 7v-4H6z" fill="#363e44" /></svg>
        <div className="ml-[3px] w-[188px] h-[21px] shrink-0 rounded-[3px] bg-[linear-gradient(#363c41,#272c30)] border border-[#434a50] flex items-center justify-between px-[3px] text-[11px] text-[#c9d4d9]">(none)<Tri className="!w-[5px] !h-[8px] text-[#626b70]" /></div>
      </div>
    </div>
  );
}

function MixerWindow() {
  return (
    <div className="absolute left-[17px] top-[440px] w-[812px] h-[500px] bg-[#424c53] border border-[#32393e] flex flex-col">
      <div className="h-[27px] flex items-center text-[#e4eaec] shrink-0 text-[11px]">
        <Tri className="ml-[12px]" />
        <svg width="18" height="14" viewBox="0 0 18 14" className="ml-[5px] shrink-0"><path d="M1 1l6 2 6 1 3 5-2 3-5-1-4-5z" fill="#e4eaec" /></svg>
        <svg width="14" height="14" viewBox="0 0 14 14" className="ml-[6px] shrink-0"><path d="M7 0v9M3 9h8l2 4H1z" fill="#d5dadc" stroke="#d5dadc" /></svg>
        <svg width="14" height="12" viewBox="0 0 14 12" className="ml-[9px] shrink-0"><path d="M0 0l7 6-7 6zM14 0L7 6l7 6z" fill="#5fb0ee" /></svg>
        <div className="ml-[7px] w-[13px] h-[11px] shrink-0 border-2 border-[#f3a93a] flex justify-end"><div className="w-[5px] bg-[#f3a93a]" /></div>
        <span className="ml-[10px] text-[15px] font-bold leading-[14px]">+</span>
        <span className="ml-[11px] font-semibold text-[#c9d1d5]">Wide</span>
        <Tri className="ml-[44px] text-[#5f6a70]" />
        <span className="ml-[372px] inline-block origin-left scale-x-[.92] whitespace-nowrap text-[12px]">Mixer - Insert 1</span>
        <div className="ml-auto w-[7px] h-[2px] -mt-[6px] bg-[#e4eaec]" />
        <div className="ml-[11px] w-[9px] h-[8px] border border-t-2 border-[#e4eaec]" />
        <span className="ml-[9px] mr-[6px] text-[17px] leading-[14px] text-[#e4eaec]">×</span>
      </div>
      <div className="flex h-[466px] pl-[4px] shrink-0 relative">
        <div className="w-[577px] h-full shrink-0 overflow-hidden flex border border-[#32393e]">
          <ScaleStrip />
          <Strip num="M" name="Master" master />
          <div className="w-[10px] h-full shrink-0 bg-[#3d464c] border-l-[3px] border-[#2b3237] flex"><div className="w-full bg-[#2b3237]" /></div>
          <Strip num="1" name="Insert 1" selected />
          {[2, 3, 4, 5, 6, 7, 8, 9, 10, 11].map(n => <Strip key={n} num={n} name={`Insert ${n}`} />)}
        </div>
        <Tri dir="l" className="absolute left-[109px] bottom-[5px] text-[#20272c]" />
        <div className="absolute left-[123px] bottom-[8px] w-[168px] h-[3px] rounded-full bg-[#21282d]" />
        <MixerTrackPanel />
      </div>
    </div>
  );
}

export default function App() {
  return (
    <div className="w-[1311px] h-[1052px] relative overflow-hidden bg-[#4f585e] [font-family:'Noto_Sans',sans-serif]">
      <TopRow />
      <Row2 />
      <div className="h-[972px] flex">
        <Sidebar />
        <div className="w-[7px] shrink-0 bg-[#4b545a] border-r border-[#3a4247]" />
        <div className="flex-1 relative bg-[#596269]">
          <ChannelRack />
          <PluginWindow />
          <MixerWindow />
          <div className="absolute left-[594px] top-[947px] text-[16.5px] leading-[20px] whitespace-nowrap text-[#3f474d]">Producer Edition v25.1.3 [build 4597] - macOS - Apple Silicon</div>
        </div>
      </div>
    </div>
  );
}
